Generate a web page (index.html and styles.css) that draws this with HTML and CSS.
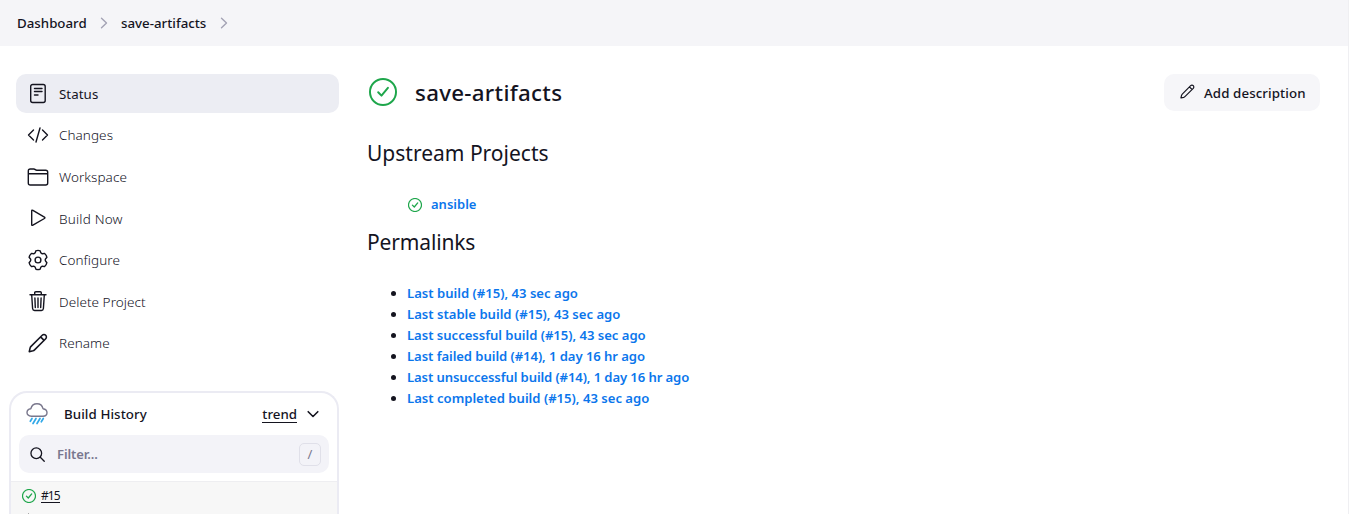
FILE: index.html
```html
<!DOCTYPE html>
<html lang="en">
<head>
<meta charset="utf-8">
<title>save-artifacts [Jenkins]</title>
<link rel="stylesheet" href="styles.css">
</head>
<body>
<svg class="defs" width="0" height="0">
  <symbol id="pencil" viewBox="0 0 512 512"><path d="M364 58 78 343c-11 11-19 25-24 40L32 478l96-23c15-4 29-13 40-24L453 147c24-24 24-65 0-89s-65-24-89 0zM322 98l90 90" fill="none" stroke="currentColor" stroke-linejoin="round" stroke-width="40"/></symbol>
  <symbol id="success" viewBox="0 0 512 512"><circle cx="256" cy="256" r="238" fill="none" stroke="currentColor" stroke-width="36"/><path d="M346 180 228 322l-60-62" fill="none" stroke="currentColor" stroke-linecap="round" stroke-linejoin="round" stroke-width="36"/></symbol>
  <symbol id="success-small" viewBox="0 0 14 14"><circle cx="7" cy="7" r="6.500" fill="none" stroke="currentColor" stroke-width="1.200"/><path d="M9.700 4.900 6.300 9 4.400 7.100" fill="none" stroke="currentColor" stroke-linecap="round" stroke-linejoin="round" stroke-width="1.300"/></symbol>
  <symbol id="chevron" viewBox="0 0 12 12"><path d="M3.500 1.300 8.500 6l-5 4.700" fill="none" stroke="currentColor" stroke-width="1.400" stroke-linecap="round" stroke-linejoin="round"/></symbol>
</svg>
<header class="breadcrumbs">
  <a class="crumb crumb-home">Dashboard</a>
  <svg class="crumb-arrow"><use href="#chevron"/></svg>
  <a class="crumb crumb-project">save-artifacts</a>
  <svg class="crumb-arrow"><use href="#chevron"/></svg>
</header>
<div class="page">
  <aside class="side">
    <nav class="tasks">
      <a class="task active"><svg viewBox="0 0 22 22"><rect x="3.700" y="1.500" width="14.500" height="18" rx="2"/><path d="M7.500 5.500h7.500M7.500 8.500h7.500M7.500 12h3.500"/></svg><span>Status</span></a>
      <a class="task t-changes"><svg viewBox="0 0 22 22"><path d="M6.500 6 1.500 11l5 5M15.500 6l5 5-5 5M13 4 9 18"/></svg><span>Changes</span></a>
      <a class="task t-workspace"><svg viewBox="0 0 22 22"><path d="M1.300 8V5q0-2 2-2h3.500q.8 0 1.500.6t1.500.6h8.900q2 0 2 2V8M1.300 7.700h19.400v9.300q0 2-2 2H3.300q-2 0-2-2z"/></svg><span>Workspace</span></a>
      <a class="task t-build"><svg viewBox="0 0 22 22"><path d="M4.700 4v13.500q0 1.300 1.200.7l11.500-6.700q1-.7 0-1.400L5.900 3.300Q4.700 2.700 4.700 4z"/></svg><span>Build Now</span></a>
      <a class="task t-configure"><svg viewBox="0 0 22 22"><circle cx="11" cy="11" r="2.900"/><path d="M8.800 1.900q2.200-1 4.400 0l.5 1.700q.5 1.200 1.900 1.100l2-.3q1.800 1.600 2.300 3.900l-1.200 1.400q-.9 1.300 0 2.600l1.200 1.400q-.5 2.300-2.300 3.900l-2-.3q-1.400-.1-1.900 1.100l-.5 1.700q-2.200 1-4.400 0l-.5-1.700q-.5-1.200-1.900-1.100l-2 .3q-1.800-1.600-2.300-3.900l1.200-1.400q.9-1.300 0-2.600L2.100 8.300q.5-2.300 2.300-3.900l2 .3q1.400.1 1.900-1.100z"/></svg><span>Configure</span></a>
      <a class="task t-delete"><svg viewBox="0 0 22 22"><path d="M4.700 5l.9 13.500q.2 2 2 2h6.800q1.800 0 2-2L17.300 5M3 4.800h16M7.700 4.500V2.800q0-1.100 1.100-1.100h4.400q1.100 0 1.100 1.100v1.700M11 8v9.500M7.900 8l.4 9.500M14.100 8l-.4 9.500"/></svg><span>Delete Project</span></a>
      <a class="task t-rename"><svg><use href="#pencil"/></svg><span>Rename</span></a>
    </nav>
    <section class="history">
      <div class="history-head">
        <svg class="weather" viewBox="0 0 22 22"><path d="M5.500 13.200Q1 13 1 9.600 1 6.200 4.800 5.700 6.200.8 11 .8t6 4.900q4 .6 4 4 0 3.400-4 3.500z" stroke="#79778c"/><path d="M6 15.500 4.300 18.300M10 15.500 7 20.500M14 15.500 11 20.500M17.300 15.500l-2 3.300" stroke="#32a9e8" stroke-width="1.700"/></svg>
        <span class="history-title">Build History</span>
        <a class="trend">trend</a>
        <svg class="down" viewBox="0 0 12 12"><path d="m1.200 3.700 4.800 4.800 4.800-4.800"/></svg>
      </div>
      <div class="filter">
        <svg class="search" viewBox="0 0 16 16"><circle cx="6.700" cy="6.700" r="5.700"/><path d="m11 11 4.200 4.200"/></svg>
        <span class="filter-text">Filter...</span><kbd>/</kbd>
      </div>
      <div class="builds">
        <div class="build"><svg class="ok"><use href="#success-small"/></svg><a class="number">#15</a></div>
        <span class="graph-tick"></span>
      </div>
    </section>
  </aside>
  <main class="main">
    <div class="title-row">
      <svg class="ok title-icon"><use href="#success"/></svg>
      <h1>save-artifacts</h1>
      <button class="edit"><svg><use href="#pencil"/></svg><span>Add description</span></button>
    </div>
    <h2 class="upstream-title">Upstream Projects</h2>
    <div class="upstream"><svg class="ok"><use href="#success-small"/></svg><a>ansible</a></div>
    <h2 class="perma-title">Permalinks</h2>
    <ul class="links">
      <li><a class="l1">Last build (#15), 43 sec ago</a></li>
      <li><a class="l2">Last stable build (#15), 43 sec ago</a></li>
      <li><a class="l3">Last successful build (#15), 43 sec ago</a></li>
      <li><a class="l4">Last failed build (#14), 1 day 16 hr ago</a></li>
      <li><a class="l5">Last unsuccessful build (#14), 1 day 16 hr ago</a></li>
      <li><a class="l6">Last completed build (#15), 43 sec ago</a></li>
    </ul>
  </main>
</div>
</body>
</html>
```
FILE: styles.css
```css
* { box-sizing: border-box; }
html, body { height: 100%; }
body { margin: 0; overflow: hidden; background: #fff; color: #14141f; font: 470 13.300px/20px "Noto Sans", "Open Sans", sans-serif; border-right: 1px solid #efeff2; }
svg { flex: none; overflow: visible; }
.defs { position: absolute; }
.ok { color: #1ea64b; }
.breadcrumbs { height: 46px; background: #f5f5f8; display: flex; align-items: center; padding-left: 17px; }
.crumb-home { width: 70px; }
.crumb-project { width: 86px; }
.crumb-arrow { width: 12px; height: 12px; color: #a3a2b4; margin: 0 11px 0 11px; }
.page { display: flex; height: 468px; }
.side { width: 339px; padding: 28px 0 0 9px; flex: none; display: flex; flex-direction: column; }
.tasks { padding-left: 7px; display: grid; grid-auto-rows: 41.600px; height: 317px; flex: none; }
.task { height: 39px; border-radius: 10px; display: flex; align-items: center; padding-left: 11px; gap: 10px; font-weight: 350; font-size: 13.500px; letter-spacing: .06px; white-space: nowrap; }
.task svg { width: 22px; height: 22px; fill: none; stroke: currentColor; stroke-width: 1.400; stroke-linecap: round; stroke-linejoin: round; }
.task.active { background: #ecedf3; font-weight: 450; font-size: 13.300px; }
.t-rename svg { width: 20px; height: 20px; margin: 0 1px; }
.t-build span, .t-delete span { margin-top: 1px; }
.t-build span { letter-spacing: .2px; }
.history { flex: 1; border: 2px solid #ebebf3; border-bottom: 0; border-radius: 18px 18px 0 0; overflow: hidden; }
.history-head { height: 42px; display: flex; align-items: center; padding: 0 18px 0 15px; }
.history-head svg, .search { fill: none; stroke: currentColor; stroke-width: 1.400; stroke-linecap: round; stroke-linejoin: round; }
.weather { width: 22px; height: 22px; }
.history-title { margin-left: 16px; letter-spacing: .08px; }
.trend { margin-left: auto; margin-right: 10px; line-height: 16px; border-bottom: 1px solid currentColor; }
.history-head .down { width: 12px; height: 12px; stroke-width: 1.600; }
.filter { height: 38px; margin: 0 8px; background: #f3f3f8; border-radius: 10px; display: flex; align-items: center; padding: 0 8px 0 11px; color: #79778f; }
.search { width: 15px; height: 15px; color: #14141f; }
.filter-text { margin-left: 12px; flex: 1; font-weight: 600; font-size: 13px; letter-spacing: -.1px; }
kbd { width: 22px; height: 23px; border: 1px solid #e0e0e9; border-radius: 5px; text-align: center; font: 400 13px/21px "Noto Sans", sans-serif; }
.builds { margin-top: 8px; background: #f7f7f7; border-top: 1px solid #eeeef1; height: 50px; padding: 6px 0 0 11px; }
.build { display: flex; align-items: center; height: 15px; gap: 5px; }
.build svg { width: 14px; height: 14px; }
.number { font-size: 12px; letter-spacing: -.9px; line-height: 13px; border-bottom: 1px solid currentColor; font-weight: 400; }
.graph-tick { display: block; width: 1px; height: 4px; background: #aaa; margin: 10px 0 0 6px; }
.main { flex: 1; padding: 28px 28px 0; }
.title-row { display: flex; align-items: center; height: 37px; }
.title-icon { width: 28px; height: 28px; margin: -2px 18px 0 2px; }
h1, h2 { margin: 0; font-size: 21px; line-height: 30px; font-weight: 450; white-space: nowrap; }
h1 { font-weight: 470; font-size: 22.300px; letter-spacing: .3px; padding-top: 1px; }
.edit { margin-left: auto; width: 156px; height: 37px; border: 0; border-radius: 10px; background: #f6f6f9; color: inherit; font: inherit; display: flex; align-items: center; gap: 9px; padding: 0 0 0 16px; white-space: nowrap; }
.edit svg { width: 15px; height: 15px; margin-top: -2px; }
.edit span { letter-spacing: .1px; }
.upstream-title { margin-top: 27px; }
.upstream { display: flex; align-items: center; height: 20px; margin: 26px 0 0 41px; gap: 9px; color: #0b76ec; font-weight: 570; font-size: 13px; }
.upstream svg { width: 14px; height: 14px; margin-top: 1px; }
.perma-title { margin-top: 13px; letter-spacing: -.15px; }
.links { margin: 26px 0 0; padding-left: 40px; font-size: 13.100px; line-height: 21px; font-weight: 560; white-space: nowrap; }
.links a { color: #0b76ec; }
.l3 { letter-spacing: -.03px; }
.l4 { letter-spacing: -.07px; }
.l5 { letter-spacing: -.11px; }
```
